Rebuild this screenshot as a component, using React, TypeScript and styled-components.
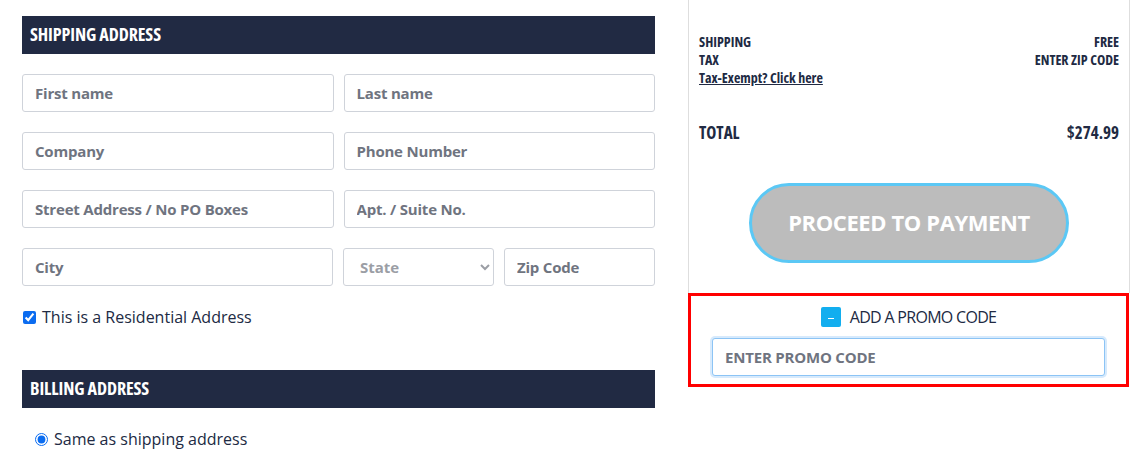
import * as React from "react";
import styled, { createGlobalStyle } from "styled-components";

const colour = {
  navy: "#212a43",
  border: "#cfd3da",
  placeholder: "#6f7480",
  panelBorder: "#dedede",
  sky: "#5bc8f5",
  red: "#ff0000",
  promo: "#12aeef",
};

const bodyFont = `"Open Sans", "Noto Sans", sans-serif`;
const narrowFont = `"Open Sans", "DejaVu Sans", sans-serif`;

const GlobalStyle = createGlobalStyle`
  html, body {
    margin: 0;
    padding: 0;
    background: #fff;
  }
  body {
    font-family: ${bodyFont};
    color: ${colour.navy};
  }
  * { box-sizing: border-box; }
`;

const Page = styled.div`
  display: flex;
  align-items: flex-start;
  gap: 33px;
  padding-left: 22px;
  width: 1146px;
  height: 449px;
  overflow: hidden;
`;

const LeftColumn = styled.section`
  width: 633px;
  padding-top: 16px;
  display: flex;
  flex-direction: column;
`;

const SectionBar = styled.h2`
  margin: 0;
  height: 38px;
  background: ${colour.navy};
  color: #fff;
  font-family: ${narrowFont};
  font-stretch: 75%;
  font-weight: 700;
  font-size: 18px;
  line-height: 36px;
  padding-left: 8px;
  letter-spacing: -0.1px;
`;

const Fields = styled.div`
  display: flex;
  flex-direction: column;
  gap: 20px;
  margin-top: 20px;
`;

const FieldRow = styled.div<{ $cols: string }>`
  display: grid;
  grid-template-columns: ${(p) => p.$cols};
  gap: 10px;
`;

const TextInput = styled.input`
  height: 38px;
  width: 100%;
  border: 1px solid ${colour.border};
  border-radius: 3px;
  padding: 0 12px;
  font-family: ${bodyFont};
  font-size: 15px;
  font-weight: 700;
  letter-spacing: -0.2px;
  color: ${colour.navy};
  &::placeholder {
    color: ${colour.placeholder};
  }
`;

const Select = styled.select`
  height: 38px;
  width: 100%;
  border: 1px solid ${colour.border};
  border-radius: 3px;
  padding: 0 10px 0 12px;
  font-family: ${bodyFont};
  font-size: 15px;
  font-weight: 700;
  color: #9b9ea5;
  background: #fff;
`;

const CheckLine = styled.label<{ $indent?: number }>`
  display: flex;
  align-items: center;
  gap: 6px;
  font-size: 16px;
  color: ${colour.navy};
  padding-left: ${(p) => p.$indent ?? 0}px;
  input {
    margin: 0;
    width: 13px;
    height: 13px;
    accent-color: #0b6cf0;
  }
`;

const ResidentialLine = styled(CheckLine)`
  margin-top: 20px;
  margin-bottom: 42px;
`;

const SameLine = styled(CheckLine)`
  margin-top: 20px;
`;

const RightColumn = styled.aside`
  width: 442px;
  display: flex;
  flex-direction: column;
`;

const Summary = styled.div`
  border-left: 1px solid ${colour.panelBorder};
  border-right: 1px solid ${colour.panelBorder};
  height: 293px;
  padding: 33px 10px 0;
  display: flex;
  flex-direction: column;
`;

const SummaryLine = styled.div`
  display: flex;
  justify-content: space-between;
  font-family: ${narrowFont};
  font-stretch: 75%;
  font-weight: 700;
  font-size: 14px;
  line-height: 18px;
`;

const ExemptLink = styled.a`
  font-family: ${narrowFont};
  font-stretch: 75%;
  font-weight: 700;
  font-size: 14px;
  line-height: 18px;
  color: ${colour.navy};
  text-decoration: underline;
  align-self: flex-start;
`;

const TotalLine = styled(SummaryLine)`
  font-size: 17px;
  line-height: 22px;
  margin-top: 35px;
`;

const PayButton = styled.button`
  align-self: center;
  margin-top: 39px;
  width: 320px;
  height: 80px;
  border-radius: 40px;
  border: 3px solid ${colour.sky};
  background: #bcbcbc;
  color: #fff;
  font-family: ${bodyFont};
  font-weight: 700;
  font-size: 22px;
  letter-spacing: -0.4px;
  padding: 0 0 3px;
`;

const PromoBox = styled.div`
  height: 94px;
  width: 441px;
  border: 3px solid ${colour.red};
  padding: 10px 21px 0;
  display: flex;
  flex-direction: column;
  gap: 10px;
`;

const PromoToggle = styled.div`
  display: flex;
  align-items: center;
  justify-content: center;
  gap: 9px;
  font-size: 16px;
  letter-spacing: -0.7px;
  color: ${colour.navy};
  height: 22px;
`;

const MinusIcon = styled.span`
  width: 20px;
  height: 20px;
  border-radius: 2px;
  background: ${colour.promo};
  display: flex;
  align-items: center;
  justify-content: center;
  &::after {
    content: "";
    width: 6px;
    height: 1px;
    margin-top: 3px;
    background: #fff;
  }
`;

const PromoInput = styled(TextInput)`
  border-color: #8cc4f5;
  box-shadow: 0 0 0 2px rgba(140, 196, 245, 0.35);
`;

export default function App() {
  return (
    <>
      <GlobalStyle />
      <Page>
        <LeftColumn>
          <SectionBar>SHIPPING ADDRESS</SectionBar>
          <Fields>
            <FieldRow $cols="1fr 1fr">
              <TextInput placeholder="First name" />
              <TextInput placeholder="Last name" />
            </FieldRow>
            <FieldRow $cols="1fr 1fr">
              <TextInput placeholder="Company" />
              <TextInput placeholder="Phone Number" />
            </FieldRow>
            <FieldRow $cols="1fr 1fr">
              <TextInput placeholder="Street Address / No PO Boxes" />
              <TextInput placeholder="Apt. / Suite No." />
            </FieldRow>
            <FieldRow $cols="311px 151px 1fr">
              <TextInput placeholder="City" />
              <Select defaultValue="">
                <option value="">State</option>
              </Select>
              <TextInput placeholder="Zip Code" />
            </FieldRow>
          </Fields>
          <ResidentialLine $indent={1}>
            <input type="checkbox" defaultChecked />
            This is a Residential Address
          </ResidentialLine>
          <SectionBar>BILLING ADDRESS</SectionBar>
          <SameLine $indent={13}>
            <input type="radio" name="billing" defaultChecked />
            Same as shipping address
          </SameLine>
        </LeftColumn>

        <RightColumn>
          <Summary>
            <SummaryLine>
              <span>SHIPPING</span>
              <span>FREE</span>
            </SummaryLine>
            <SummaryLine>
              <span>TAX</span>
              <span>ENTER ZIP CODE</span>
            </SummaryLine>
            <ExemptLink href="#">Tax-Exempt? Click here</ExemptLink>
            <TotalLine>
              <span>TOTAL</span>
              <span>$274.99</span>
            </TotalLine>
            <PayButton>PROCEED TO PAYMENT</PayButton>
          </Summary>
          <PromoBox>
            <PromoToggle>
              <MinusIcon />
              ADD A PROMO CODE
            </PromoToggle>
            <PromoInput placeholder="ENTER PROMO CODE" />
          </PromoBox>
        </RightColumn>
      </Page>
    </>
  );
}
